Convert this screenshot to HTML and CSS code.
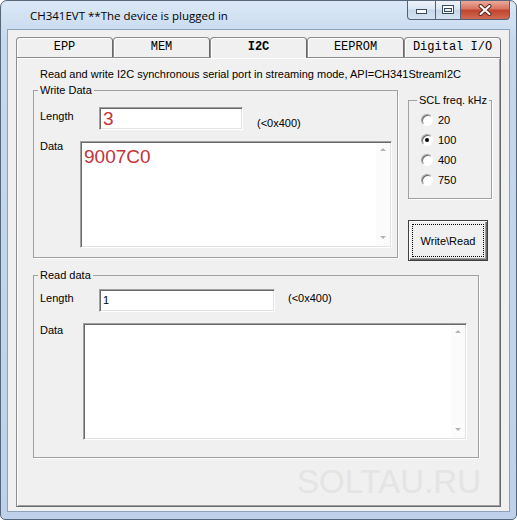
FILE: index.html
```html
<!DOCTYPE html>
<html lang="en">
<head>
  <meta charset="UTF-8" />
  <title>CH341EVT</title>
  <link rel="stylesheet" href="styles.css">
</head>
<body>
  <!-- Window -->
  <div class="window">
    <div class="titlebar">
      <span class="title">CH341EVT **The device is plugged in</span>
      <div class="caption">
        <span class="cap-btn cap-min">
          <svg width="12" height="6" viewBox="0 0 12 6"><rect x="0.5" y="0.5" width="10" height="4" fill="#fff" stroke="#3b4b5e"/></svg>
        </span>
        <span class="cap-btn cap-max">
          <svg width="12" height="10" viewBox="0 0 12 10"><rect x="0.5" y="0.5" width="11" height="8" fill="#fff" stroke="#3b4b5e"/><rect x="2.5" y="3.5" width="7" height="3" fill="#e8eef6" stroke="#3b4b5e"/></svg>
        </span>
        <span class="cap-btn cap-close">
          <svg width="16" height="12" viewBox="0 0 16 12">
            <path d="M3.5 2 L12.5 10 M12.5 2 L3.5 10" stroke="#5a2a22" stroke-width="4" stroke-linecap="round"/>
            <path d="M3.5 2 L12.5 10 M12.5 2 L3.5 10" stroke="#fff" stroke-width="2" stroke-linecap="round"/>
          </svg>
        </span>
      </div>
    </div>

    <div class="client">
      <!-- Tabs -->
      <div class="tabs">
        <div class="tab">EPP</div>
        <div class="tab">MEM</div>
        <div class="tab active">I2C</div>
        <div class="tab">EEPROM</div>
        <div class="tab">Digital I/O</div>
      </div>

      <div class="panel">
        <p class="intro">Read and write I2C synchronous serial port in streaming mode, API=CH341StreamI2C</p>

        <div class="top-row">
          <!-- Write Data -->
          <fieldset class="group write-group">
            <legend>Write Data</legend>
            <div class="field-row">
              <span class="label len-label">Length</span>
              <div class="edit write-len big-red">3</div>
              <span class="hint write-hint">(&lt;0x400)</span>
            </div>
            <div class="field-row data-row">
              <span class="label write-data-label">Data</span>
              <div class="memo write-memo">
                <div class="memo-text big-red">9007C0</div>
                <div class="scroll"><span class="arrow up"></span><span class="arrow down"></span></div>
              </div>
            </div>
          </fieldset>

          <div class="side">
            <fieldset class="group scl-group">
              <legend>SCL freq. kHz</legend>
              <div class="radio"><span class="radio-dot"></span>20</div>
              <div class="radio"><span class="radio-dot checked"></span>100</div>
              <div class="radio"><span class="radio-dot"></span>400</div>
              <div class="radio"><span class="radio-dot"></span>750</div>
            </fieldset>
            <div class="button"><span class="focus">Write\Read</span></div>
          </div>
        </div>

        <!-- Read data -->
        <fieldset class="group read-group">
          <legend>Read data</legend>
          <div class="field-row read-len-row">
            <span class="label len-label">Length</span>
            <div class="edit read-len">1</div>
            <span class="hint read-hint">(&lt;0x400)</span>
          </div>
          <div class="field-row read-data-row">
            <span class="label read-data-label">Data</span>
            <div class="memo read-memo">
              <div class="memo-text"></div>
              <div class="scroll"><span class="arrow up"></span><span class="arrow down"></span></div>
            </div>
          </div>
        </fieldset>

        <div class="watermark">SOLTAU.RU</div>
      </div>
    </div>
  </div>
</body>
</html>
```

FILE: styles.css
```css
/* Global */
* {
  box-sizing: border-box;
}
body {
  margin: 0;
  font-family: 'Liberation Sans', Arial, sans-serif;
  font-size: 11px;
  color: #000;
  background: #fff;
}

/* Window frame */
.window {
  width: 517px;
  height: 520px;
  border: 1px solid #56677c;
  border-radius: 7px 7px 5px 5px;
  background: linear-gradient(#dbe8f6, #c5d8ee 40px, #bdd2ea);
  display: flex;
  flex-direction: column;
  overflow: hidden;
}
.titlebar {
  height: 28px;
  display: flex;
  align-items: flex-start;
  flex-shrink: 0;
}
.title {
  font-family: 'Open Sans', sans-serif;
  font-size: 11.5px;
  line-height: 17px;
  margin: 6px 0 0 29px;
}
.caption {
  margin-left: auto;
  margin-right: 6px;
  display: flex;
}
.cap-btn {
  height: 19px;
  display: flex;
  align-items: center;
  justify-content: center;
  border: 1px solid #52637a;
  border-top: none;
  border-left: none;
  background: linear-gradient(#eef3f9, #dce6f2 45%, #c7d6e8 50%, #d5e2f0);
}
.cap-min {
  width: 29px;
  border-left: 1px solid #52637a;
  border-bottom-left-radius: 4px;
  padding-top: 4px;
}
.cap-max {
  width: 25px;
}
.cap-close {
  width: 49px;
  border-bottom-right-radius: 4px;
  background: linear-gradient(#eaaa9c, #d8725f 45%, #c2432d 50%, #d06a52);
}

/* Client area */
.client {
  margin: 0 6px 7px 6px;
  height: 483px;
  border: 1px solid #8da2ba;
  background: #f0f0f0;
  padding: 7px 0 0 8px;
}

/* Tabs */
.tabs {
  display: flex;
  height: 20px;
  position: relative;
  z-index: 1;
}
.tab {
  width: 97px;
  height: 20px;
  border: 1px solid #8c8c8c;
  border-bottom: none;
  border-right-color: #696969;
  border-radius: 4px 4px 0 0;
  box-shadow: inset 1px 1px #fff;
  background: #f0f0f0;
  font-family: 'Liberation Mono', 'Courier New', monospace;
  font-size: 12px;
  line-height: 19px;
  text-align: center;
}
.tab.active {
  height: 21px;
  font-weight: bold;
}

/* Tab page */
.panel {
  width: 485px;
  height: 450px;
  border: 1px solid #8c8c8c;
  border-right-color: #696969;
  border-bottom-color: #696969;
  box-shadow: inset 1px 1px #fff, inset -1px -1px #a0a0a0;
  padding: 10px 0 0 16px;
}
.intro {
  margin: 0 0 0 7px;
  line-height: 13px;
  white-space: nowrap;
}
.top-row {
  display: flex;
  align-items: flex-start;
  margin-top: 3px;
}

/* Group boxes */
.group {
  margin: 0;
  border: 1px solid #a0a0a0;
  box-shadow: 1px 1px 0 #fff;
}
.group legend {
  line-height: 13px;
  padding: 0 2px;
  margin-left: -2px;
}
.write-group {
  width: 365px;
  padding: 0 5px 9px 6px;
}
.read-group {
  width: 446px;
  margin-top: 8px;
  padding: 0 11px 17px 6px;
}
.field-row {
  display: flex;
  align-items: flex-start;
  margin-top: 10px;
  line-height: 13px;
}
.read-len-row {
  margin-top: 7px;
}
.read-data-row {
  margin-top: 11px;
}
.len-label {
  width: 59px;
  margin-top: 3px;
}
.write-data-label {
  width: 40px;
}
.read-data-label {
  width: 43px;
  margin-top: 1px;
}
.hint {
  margin-left: 14px;
}
.write-hint {
  margin-top: 10px;
}
.read-hint {
  margin-left: 13px;
  margin-top: 3px;
}

/* Edit boxes */
.edit,
.memo {
  background: #fff;
  border: 1px solid;
  border-color: #a0a0a0 #fff #fff #a0a0a0;
  box-shadow: inset 1px 1px #696969, inset -1px -1px #e3e3e3;
}
.edit {
  height: 23px;
  padding: 1px 3px;
  line-height: 19px;
}
.write-len {
  width: 144px;
}
.read-len {
  width: 176px;
}
.big-red {
  font-size: 19px;
  color: #c3333a;
}
.memo {
  display: flex;
  margin-top: 1px;
}
.write-memo {
  width: 312px;
  height: 107px;
}
.read-memo {
  width: 384px;
  height: 117px;
  margin-top: 0;
}
.memo-text {
  flex: 1;
  padding: 4px 2px 0 3px;
  line-height: 22px;
}
.scroll {
  width: 14px;
  margin: 1px 1px 1px 0;
  display: flex;
  flex-direction: column;
  justify-content: space-between;
  align-items: center;
  padding: 5px 0 7px;
  background: #fbfbfb;
}
.arrow {
  width: 0;
  height: 0;
  border-left: 3px solid transparent;
  border-right: 3px solid transparent;
}
.arrow.up {
  border-bottom: 3px solid #b4b4b4;
}
.arrow.down {
  border-top: 3px solid #b4b4b4;
}

/* SCL radio group */
.side {
  margin: 10px 0 0 10px;
}
.scl-group {
  width: 84px;
  padding: 3px 0 8px 12px;
}
.scl-group legend {
  margin-left: -4px;
}
.radio {
  height: 20px;
  display: flex;
  align-items: center;
}
.radio-dot {
  width: 12px;
  height: 12px;
  margin-right: 5px;
  border-radius: 50%;
  border: 1px solid;
  border-color: #a0a0a0 #fff #fff #a0a0a0;
  box-shadow: inset 1px 1px #696969;
  background: #fff;
  display: flex;
  align-items: center;
  justify-content: center;
}
.radio-dot.checked::after {
  content: "";
  width: 4px;
  height: 4px;
  border-radius: 50%;
  background: #000;
}

/* Button */
.button {
  width: 80px;
  height: 41px;
  margin-top: 21px;
  border: 1px solid #404040;
  background: #f0f0f0;
  box-shadow: inset 1px 1px #fff, inset -1px -1px #696969, inset -2px -2px #a0a0a0;
  padding: 3px;
  display: flex;
}
.focus {
  flex: 1;
  border: 1px dotted #000;
  display: flex;
  align-items: center;
  justify-content: center;
}

/* Watermark */
.watermark {
  margin-top: 7px;
  padding-right: 19px;
  text-align: right;
  font-size: 33px;
  line-height: 33px;
  color: #e4e4e4;
}
```
